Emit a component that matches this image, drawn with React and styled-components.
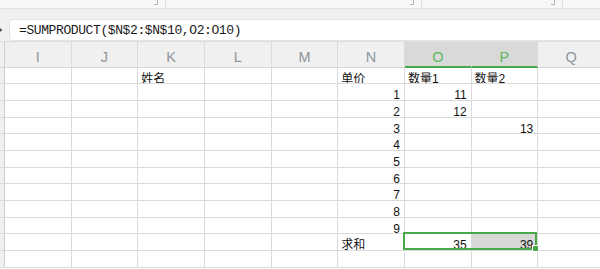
import React from "react";
import styled, { createGlobalStyle } from "styled-components";

const GlobalStyle = createGlobalStyle`
  html, body {
    margin: 0;
    padding: 0;
    background: #ffffff;
    overflow: hidden;
  }
  body {
    font-family: "Liberation Sans", "Noto Sans CJK SC", sans-serif;
  }
`;

const green = "#4aa84a";

const Wrapper = styled.div`
  display: flex;
  flex-direction: column;
  width: 600px;
  height: 269px;
  overflow: hidden;
`;

const Ribbon = styled.div`
  display: flex;
  height: 8px;
  background: #f7f7f7;
  border-bottom: 1px solid #e2e2e2;
`;

const RibbonGroup = styled.div`
  position: relative;
  flex: 0 0 ${({ width }) => (width ? `${width}px` : "auto")};
  flex-grow: ${({ width }) => (width ? 0 : 1)};
  border-right: ${({ last }) => (last ? "none" : "1px solid #e0e0e0")};
`;

const Launcher = styled.svg`
  position: absolute;
  right: 7px;
  top: 0;
`;

const FormulaArea = styled.div`
  display: flex;
  align-items: flex-start;
  height: 33px;
  padding: 10px 0 0 0;
  box-sizing: border-box;
  background: #f0f0f0;
  border-bottom: 1px solid #dedede;
`;

const NameTail = styled.div`
  display: flex;
  align-items: center;
  width: 9px;
  height: 22px;
`;

const FormulaInput = styled.div`
  flex: 1;
  display: flex;
  align-items: center;
  height: 22px;
  box-sizing: border-box;
  padding: 1px 0 0 9px;
  background: #ffffff;
  border: 1px solid #e4e4e4;
  border-right: none;
  border-radius: 4px 0 0 4px;
  font-family: "Liberation Mono", "DejaVu Sans Mono", monospace;
  font-size: 13px;
  letter-spacing: -0.4px;
  color: #1a1a1a;
`;

const Sheet = styled.div`
  display: grid;
  grid-template-columns: 5px repeat(9, 66.667px);
  grid-template-rows: 25.8px repeat(12, 16.667px);
`;

const Corner = styled.div`
  background: #f0f0f0;
  border-right: 1px solid #cfcfcf;
  border-bottom: 1px solid #d6d6d6;
`;

const ColHeader = styled.div`
  box-sizing: border-box;
  display: flex;
  justify-content: center;
  padding-top: 7px;
  font-size: 14.5px;
  line-height: 16px;
  color: ${({ selected }) => (selected ? "#5cb85c" : "#8f959b")};
  background: ${({ selected }) => (selected ? "#d9d9d9" : "#f0f0f0")};
  border-right: 1px solid #dcdcdc;
  border-bottom: ${({ selected }) => (selected ? `2px solid ${green}` : "1px solid #d6d6d6")};
`;

const RowHeader = styled.div`
  background: #f0f0f0;
  border-right: 1px solid #cfcfcf;
  border-bottom: 1px solid #dcdcdc;
`;

const Cell = styled.div`
  position: relative;
  box-sizing: border-box;
  overflow: ${({ active }) => (active ? "visible" : "hidden")};
  white-space: nowrap;
  padding: 3px ${({ align }) => (align === "right" ? "4px" : "0")} 0
    ${({ align }) => (align === "right" ? "0" : "3px")};
  text-align: ${({ align }) => align || "left"};
  font-size: 12px;
  line-height: 16px;
  color: #111111;
  background: ${({ shaded }) => (shaded ? "#d8d8d8" : "#ffffff")};
  border-right: 1px solid #dadada;
  border-bottom: 1px solid #dadada;
`;

const Selection = styled.div`
  position: absolute;
  left: -2px;
  top: -2px;
  width: calc(200% + 3px);
  height: calc(100% + 2px);
  box-sizing: border-box;
  border: 2px solid ${green};
  pointer-events: none;
  z-index: 2;
`;

const FillHandle = styled.div`
  position: absolute;
  right: -4px;
  bottom: -4px;
  width: 5px;
  height: 5px;
  background: ${green};
  border: 1px solid #ffffff;
`;

const columns = ["I", "J", "K", "L", "M", "N", "O", "P", "Q"];
const selectedCols = ["O", "P"];

const rows = [
  { K: "姓名", N: "单价", O: "数量1", P: "数量2" },
  { N: 1, O: 11 },
  { N: 2, O: 12 },
  { N: 3, P: 13 },
  { N: 4 },
  { N: 5 },
  { N: 6 },
  { N: 7 },
  { N: 8 },
  { N: 9 },
  { N: "求和", O: 35, P: 39 },
  {}
];

const LauncherIcon = () => (
  <Launcher width="4" height="5" viewBox="0 0 4 5">
    <path d="M3.5 0 V4.5 H0" fill="none" stroke="#b5b5b5" strokeWidth="1" />
  </Launcher>
);

export default function App() {
  return (
    <Wrapper>
      <GlobalStyle />
      <Ribbon>
        <RibbonGroup width={165}>
          <LauncherIcon />
        </RibbonGroup>
        <RibbonGroup width={255}>
          <LauncherIcon />
        </RibbonGroup>
        <RibbonGroup width={140}>
          <LauncherIcon />
        </RibbonGroup>
        <RibbonGroup last />
      </Ribbon>
      <FormulaArea>
        <NameTail>
          <svg width="4" height="6" viewBox="0 0 4 6">
            <path d="M0 1 L2.5 3 L0 5 Z" fill="#555" />
          </svg>
        </NameTail>
        <FormulaInput>=SUMPRODUCT($N$2:$N$10,O2:O10)</FormulaInput>
      </FormulaArea>
      <Sheet>
        <Corner />
        {columns.map((c) => (
          <ColHeader key={c} selected={selectedCols.includes(c)}>
            {c}
          </ColHeader>
        ))}
        {rows.map((row, i) => (
          <React.Fragment key={i}>
            <RowHeader />
            {columns.map((c) => {
              const v = row[c];
              const isNum = typeof v === "number";
              const active = i === 10 && c === "O";
              return (
                <Cell
                  key={c}
                  align={isNum ? "right" : "left"}
                  shaded={i === 10 && c === "P"}
                  active={active}
                >
                  {v}
                  {active && (
                    <Selection>
                      <FillHandle />
                    </Selection>
                  )}
                </Cell>
              );
            })}
          </React.Fragment>
        ))}
      </Sheet>
    </Wrapper>
  );
}
